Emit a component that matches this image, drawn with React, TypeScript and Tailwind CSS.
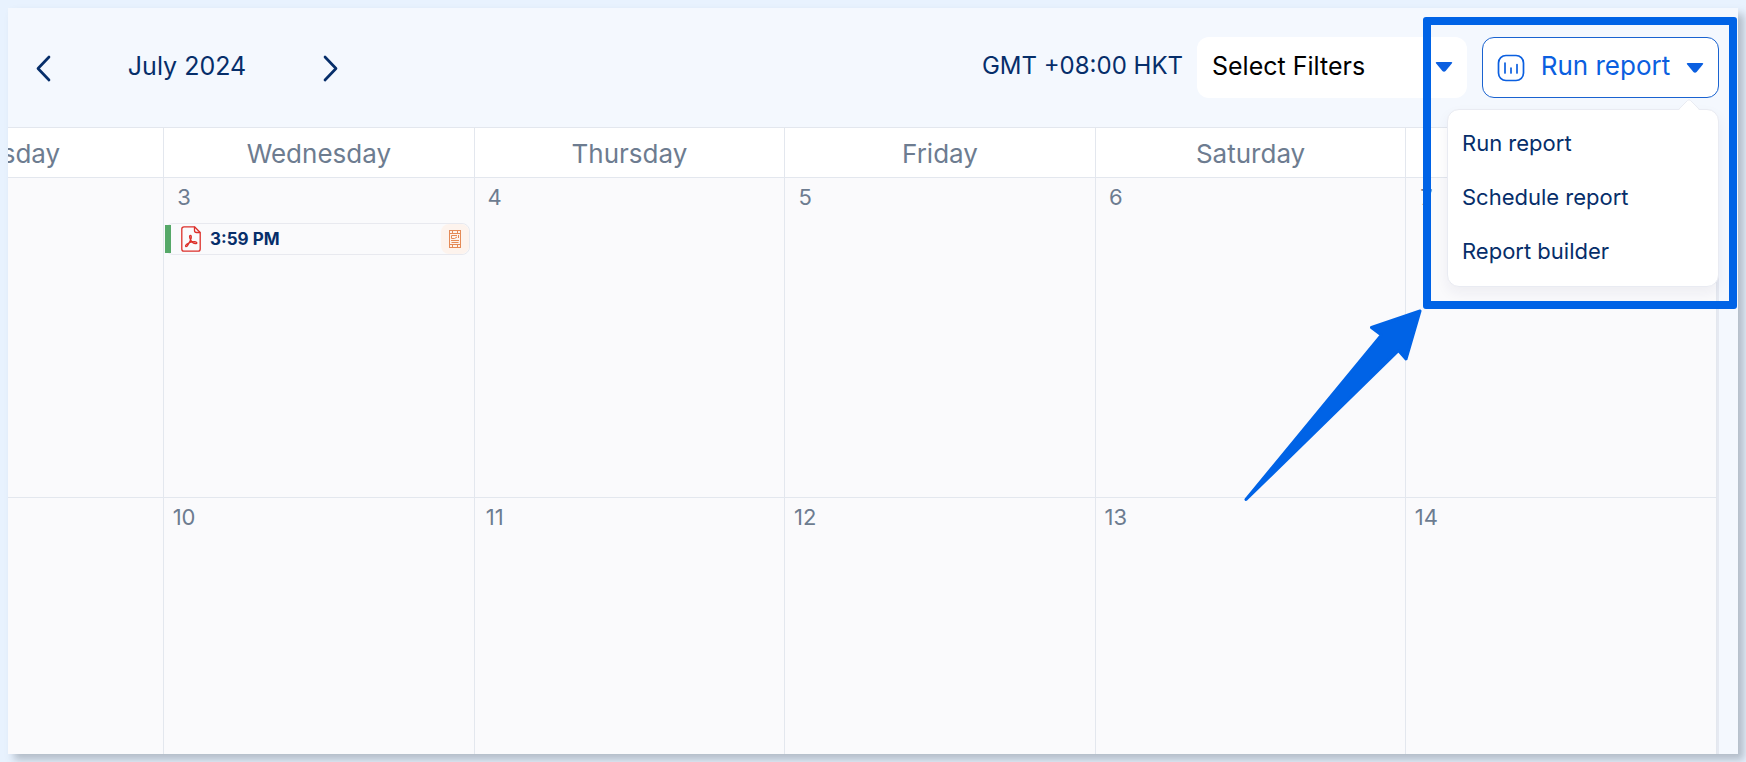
import React, { useState } from 'react';

const days = ['Tuesday', 'Wednesday', 'Thursday', 'Friday', 'Saturday', 'Sunday'];

const weeks = [
  ['', '3', '4', '5', '6', '7'],
  ['', '10', '11', '12', '13', '14'],
];

const menuItems = ['Run report', 'Schedule report', 'Report builder'];

function Chevron({ direction }: { direction: 'left' | 'right' }) {
  return (
    <svg width="16" height="28" viewBox="0 0 16 28" fill="none" stroke="currentColor" strokeWidth="2.7" strokeLinecap="round" strokeLinejoin="round">
      <path d={direction === 'left' ? 'M14 3 L3 14.5 L14 26' : 'M2 3 L13 14.5 L2 26'} />
    </svg>
  );
}

function Caret({ className }: { className?: string }) {
  return (
    <svg width="18" height="12" viewBox="0 0 18 12" fill="currentColor" className={className}>
      <path d="M1.6 1 H16.4 Q18 1 16.8 2.6 L10.6 10 Q9 11.6 7.4 10 L1.2 2.6 Q0 1 1.6 1 Z" />
    </svg>
  );
}

function ReportIcon() {
  return (
    <svg width="28" height="28" viewBox="0 0 28 28" fill="none" stroke="currentColor" strokeWidth="1.7" strokeLinecap="round">
      <rect x="1.5" y="1.5" width="25" height="25" rx="7.5" />
      <path d="M8 9 V19 M14 14 V19 M20 10.5 V19" />
    </svg>
  );
}

function PdfIcon() {
  return (
    <svg width="20" height="26" viewBox="0 0 20 26" fill="none" stroke="#dc2f2a" strokeWidth="1.3" strokeLinejoin="round">
      <path d="M3 .8 H13.5 L19.2 6.5 V23 Q19.2 25.2 17 25.2 H3 Q.8 25.2 .8 23 V3 Q.8 .8 3 .8 Z" />
      <path d="M13.5 .8 V4.5 Q13.5 6.5 15.5 6.5 H19.2" />
      <path d="M9.5 9.5 C8 9.5 8.6 12 9.6 14 C10.800 16.2 13 17.8 15 17.6 C16.8 17.2 15.5 15.6 13 15.7 C10 15.8 7 17.2 5.3 18.6 C3.6 20.2 5.2 21.4 6.5 19.6 C8.2 17.2 9.8 14 10.2 12 C10.400 10.600 10.200 9.5 9.5 9.5 Z" />
    </svg>
  );
}

function FilmIcon() {
  return (
    <svg width="12" height="18" viewBox="0 0 12 18" fill="none" stroke="#e58a56" strokeWidth="1">
      <rect x=".5" y=".5" width="11" height="17" />
      <path d="M.5 3.5 H11.5 M.5 14.5 H11.5 M3.5 .5 V3.5 M8.5 .5 V3.5 M3.5 14.5 V17.5 M8.5 14.5 V17.5" />
      <path d="M2.5 5.5 H8 M2.5 5.5 V8.500 H5.5 L8 7 M9.500 5 V8 M2 10.5 H10 M2.5 12.5 H9.5" />
    </svg>
  );
}

function ReportEvent() {
  return (
    <button type="button" className="mt-3 ml-px flex h-8 w-[calc(100%-5px)] items-center rounded-lg border border-[#e8e9ef] text-left">
      <span className="-ml-px h-7 w-[6px] bg-[#56a868]" />
      <span className="ml-[10px]">
        <PdfIcon />
      </span>
      <span className="ml-[9px] text-[17px] leading-7 font-bold text-[#062e6a]">3:59 PM</span>
      <span className="ml-auto flex h-full w-7 items-center justify-center rounded-lg bg-[#fdf3ed]">
        <FilmIcon />
      </span>
    </button>
  );
}

function Calendar() {
  return (
    <div className="mr-[19px] flex min-h-0 flex-1 justify-end overflow-hidden border-r-2 border-[#e6e9f1] bg-[#fafafc]">
      {/* six columns, the first one is scrolled halfway out of view */}
      <table className="w-[109.1%] shrink-0 table-fixed border-collapse self-start">
        <thead>
          <tr className="h-[50px] bg-white">
            {days.map((day) => (
              <th key={day} className="border border-[#e3e7ee] p-0 pt-[2px] text-[26px] leading-8 font-normal text-[#6d7c90]">
                {day}
              </th>
            ))}
          </tr>
        </thead>
        <tbody>
          {weeks.map((week) => (
            <tr key={week[1]} className="h-80">
              {week.map((date) => (
                <td key={date} className="border border-[#e3e7ee] p-0 align-top">
                  <div className="mt-[5px] ml-2 w-6 text-center text-[22px] leading-7 text-[#6d7c90]">{date}</div>
                  {date === '3' && <ReportEvent />}
                </td>
              ))}
            </tr>
          ))}
        </tbody>
      </table>
    </div>
  );
}

function ReportMenu() {
  return (
    <div className="absolute top-full right-0 z-10 mt-[11px] w-[272px] rounded-xl border border-[#e9ebf2] bg-white py-[7px] shadow-[0_6px_14px_rgba(30,40,80,0.06)]">
      <svg width="22" height="12" viewBox="0 0 22 12" className="absolute right-[18px] bottom-full -mb-px">
        <path d="M0 12 L9.5 1.5 Q11 0 12.5 1.5 L22 12 Z" fill="#fff" />
        <path d="M0 11 L9.5 1.5 Q11 0 12.5 1.5 L22 11" fill="none" stroke="#e9ebf2" />
      </svg>
      <ul>
        {menuItems.map((item) => (
          <li key={item}>
            <button type="button" className="block h-[54px] w-full px-[14px] pb-[2px] text-left text-[22px] leading-8 text-[#062e6a]">
              {item}
            </button>
          </li>
        ))}
      </ul>
    </div>
  );
}

export default function App() {
  const [menuOpen, setMenuOpen] = useState(true);

  return (
    <div className="flex h-screen flex-col bg-[#e8f2fe] p-2 font-[Inter,'Open_Sans',sans-serif]">
      <div className="relative flex min-h-0 flex-1 flex-col bg-[#f4f8fe] shadow-[6px_6px_8px_rgba(80,90,100,0.35)]">
        <header className="flex h-[119px] shrink-0 items-start justify-between pt-[29px] pr-[19px] pl-[27px]">
          <div className="flex h-[61px] w-[304px] items-center justify-between text-[#062e6a]">
            <button type="button" aria-label="Previous month">
              <Chevron direction="left" />
            </button>
            <h1 className="pb-1 text-[25px] leading-8">July 2024</h1>
            <button type="button" aria-label="Next month">
              <Chevron direction="right" />
            </button>
          </div>

          <div className="flex h-[61px] items-center text-[25px] leading-8">
            <label htmlFor="filters" className="mr-[14px] pb-1 text-2xl leading-8 text-[#062e6a]">
              GMT +08:00 HKT
            </label>
            <div className="relative mr-[15px] h-full w-[270px]">
              <select id="filters" className="h-full w-full appearance-none rounded-xl bg-white px-[15px] pb-1 text-black">
                <option>Select Filters</option>
              </select>
              <Caret className="pointer-events-none absolute top-6 right-[14px] text-[#0b5fe0]" />
            </div>
            <div className="relative h-full">
              <button
                type="button"
                onClick={() => setMenuOpen(!menuOpen)}
                className="flex h-full w-[237px] items-center justify-between rounded-xl border border-[#1a63d0] bg-white px-[14px] text-[#0b5fe0]"
              >
                <ReportIcon />
                <span className="pb-1 text-[26px] leading-8">Run report</span>
                <Caret />
              </button>
              {menuOpen && <ReportMenu />}
            </div>
          </div>
        </header>

        <Calendar />

        {/* callout frame and arrow */}
        <div className="pointer-events-none absolute top-[9px] right-px z-20 h-[292px] w-[314px] rounded-[3px] border-8 border-[#0063e6]" />
        <svg width="180" height="194" viewBox="0 0 180 194" className="pointer-events-none absolute top-[300px] right-[315px] z-20">
          <path
            d="M177 3 L128.500 19.500 L138.500 27 L3 191.500 L155.500 42.500 L163 51 Z"
            fill="#0063e6"
            stroke="#0063e6"
            strokeWidth="3"
            strokeLinejoin="round"
          />
        </svg>
      </div>
    </div>
  );
}
